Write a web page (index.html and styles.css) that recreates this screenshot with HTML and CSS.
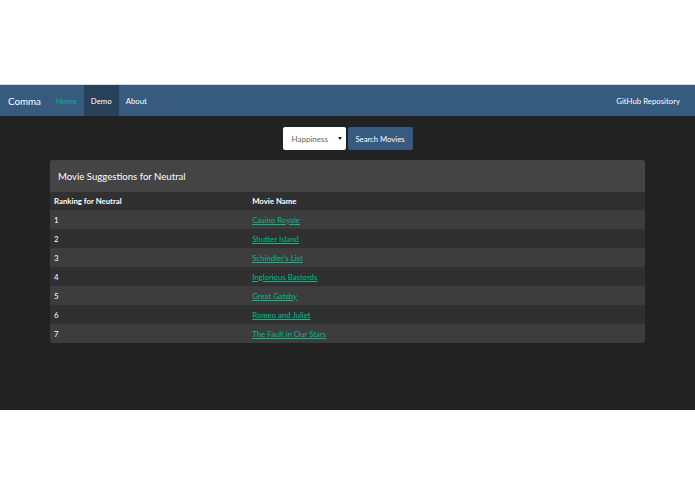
FILE: index.html
```html
<!DOCTYPE html>
<html>
<head>
<meta charset="utf-8">
<link rel="stylesheet" href="styles.css">
</head>
<body>
<div class="top-space"></div>
<div class="app">
  <nav class="navbar">
    <div class="nav-left">
      <span class="brand">Comma</span>
      <a class="nav-link home">Home</a>
      <a class="nav-link active">Demo</a>
      <a class="nav-link">About</a>
    </div>
    <a class="nav-link">GitHub Repository</a>
  </nav>
  <div class="content">
    <form class="search">
      <div class="select"><span>Happiness</span><span class="caret"></span></div>
      <button type="button" class="btn">Search Movies</button>
    </form>
    <div class="panel">
      <div class="panel-heading">Movie Suggestions for Neutral</div>
      <table class="table">
        <thead>
          <tr><th class="c1">Ranking for Neutral</th><th>Movie Name</th></tr>
        </thead>
        <tbody>
          <tr class="odd"><td>1</td><td><a>Casino Royale</a></td></tr>
          <tr><td>2</td><td><a>Shutter Island</a></td></tr>
          <tr class="odd"><td>3</td><td><a>Schindler's List</a></td></tr>
          <tr><td>4</td><td><a>Inglorious Basterds</a></td></tr>
          <tr class="odd"><td>5</td><td><a>Great Gatsby</a></td></tr>
          <tr><td>6</td><td><a>Romeo and Juliet</a></td></tr>
          <tr class="odd"><td>7</td><td><a>The Fault in Our Stars</a></td></tr>
        </tbody>
      </table>
    </div>
  </div>
</div>
</body>
</html>
```
FILE: styles.css
```css
* { box-sizing: border-box; }
html, body { margin: 0; padding: 0; background: #fff; }
body { font-family: Lato, "Open Sans", sans-serif; color: #fff; }
.top-space { height: 85px; border-bottom: 1px solid #d9d9d9; }
.app { background: #222222; height: 325px; }
.navbar {
  height: 31px;
  background: #375a7f;
  display: flex;
  justify-content: space-between;
  align-items: stretch;
  padding: 0 8px 0 8px;
}
.nav-left { display: flex; align-items: stretch; }
.brand { font-size: 9.8px; display: flex; align-items: center; margin-right: 8px; }
.nav-link {
  font-size: 7.8px;
  display: flex;
  align-items: center;
  padding: 0 7px;
  color: #fff;
}
.nav-link.home { color: #00bc8c; }
.nav-link.active { background: #28415b; }
.content { padding-top: 11px; }
.search { display: flex; justify-content: center; gap: 2px; margin: 0 0 10px 0; }
.select {
  width: 63px; height: 23px; background: #fff; border-radius: 2px;
  display: flex; align-items: center; justify-content: space-between;
  padding: 0 4px 0 9px; color: #666; font-size: 8px;
}
.caret {
  width: 0; height: 0;
  border-left: 2px solid transparent; border-right: 2px solid transparent;
  border-top: 3px solid #222;
}
.btn {
  width: 65px; height: 23px; background: #375a7f; border: none; border-radius: 2px;
  color: #fff; font-family: Lato, sans-serif; font-size: 7.7px; padding: 0;
}
.panel {
  margin: 0 50px; background: #303030; border-radius: 3px; overflow: hidden;
}
.panel-heading {
  height: 32px; background: #444444; font-size: 9.6px;
  display: flex; align-items: center; padding-left: 8px;
}
.table { width: 100%; border-collapse: collapse; font-size: 7.8px; }
.table th, .table td { text-align: left; padding: 0 4px; }
.table th { height: 18px; font-weight: bold; background: #303030; }
.table td { height: 19px; }
.table .c1 { width: 33.3%; }
.table tr.odd td { background: #3d3d3d; }
.table a { color: #00bc8c; text-decoration: underline; }
```
